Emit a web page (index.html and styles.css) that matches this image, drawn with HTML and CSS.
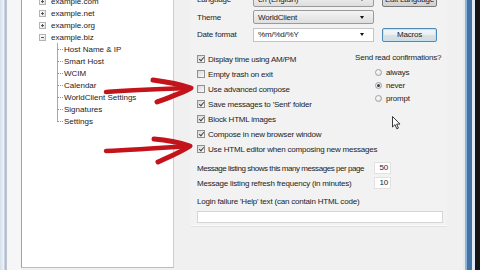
FILE: index.html
```html
<!DOCTYPE html>
<html lang="en">
<head>
    <meta charset="UTF-8">
    <title>WorldClient Settings</title>
    <link rel="stylesheet" href="styles.css">
</head>
<body>

<div class="window">
    <div class="frame-left"></div>
    <div class="gutter"></div>

    <div class="tree">
        <div class="tree-list">
            <div class="node"><span class="expander"></span>example.com</div>
            <div class="node"><span class="expander"></span>example.net</div>
            <div class="node"><span class="expander"></span>example.org</div>
            <div class="node"><span class="expander open"></span>example.biz</div>
            <div class="children">
                <div class="leaf">Host Name &amp; IP</div>
                <div class="leaf">Smart Host</div>
                <div class="leaf">WCIM</div>
                <div class="leaf">Calendar</div>
                <div class="leaf">WorldClient Settings</div>
                <div class="leaf">Signatures</div>
                <div class="leaf last">Settings</div>
            </div>
        </div>
    </div>

    <div class="settings">
        <div class="page">
            <div class="form">
                <div class="form-row">
                    <label>Language</label>
                    <div class="combo"><span class="val">en (English)</span><span class="caret"></span></div>
                    <div class="btn">Edit Language</div>
                </div>
                <div class="form-row">
                    <label>Theme</label>
                    <div class="combo"><span class="val">WorldClient</span><span class="caret"></span></div>
                </div>
                <div class="form-row">
                    <label>Date format</label>
                    <div class="combo edit"><span class="val">%m/%d/%Y</span><span class="caret"></span></div>
                    <div class="btn focus">Macros</div>
                </div>
            </div>

            <div class="options">
                <div class="checks">
                    <div class="check"><span class="box on"></span>Display time using AM/PM</div>
                    <div class="check"><span class="box"></span>Empty trash on exit</div>
                    <div class="check"><span class="box"></span>Use advanced compose</div>
                    <div class="check"><span class="box on"></span>Save messages to 'Sent' folder</div>
                    <div class="check"><span class="box on"></span>Block HTML images</div>
                    <div class="check"><span class="box on"></span>Compose in new browser window</div>
                    <div class="check"><span class="box on"></span>Use HTML editor when composing new messages</div>
                </div>
                <div class="readconf">
                    <div class="readconf-title">Send read confirmations?</div>
                    <div class="radio"><span class="dot"></span>always</div>
                    <div class="radio"><span class="dot on"></span>never</div>
                    <div class="radio"><span class="dot"></span>prompt</div>
                </div>
            </div>

            <div class="num-row">
                <span class="tight">Message listing shows this many messages per page</span>
                <div class="num">50</div>
            </div>
            <div class="num-row">
                <span>Message listing refresh frequency (in minutes)</span>
                <div class="num">10</div>
            </div>

            <div class="help-label">Login failure 'Help' text (can contain HTML code)</div>
            <div class="help"></div>
        </div>
    </div>

    <div class="frame-right"></div>
</div>

<svg class="arrows" width="480" height="270" viewBox="0 0 480 270">
    <g fill="none" stroke="#c3131b" stroke-linecap="round" stroke-linejoin="round">
        <path stroke-width="4.5" d="M106 92 C130 90 160 89 190 88"/>
        <path stroke-width="5" d="M153 80 C168 82 182 85 191 88 C182 93 168 98 157 102"/>
        <path stroke-width="4.5" d="M106 151 C130 150 160 148 189 146"/>
        <path stroke-width="5" d="M154 139 C168 140 181 143 190 146 C181 152 169 157 158 162"/>
    </g>
</svg>

<svg class="cursor" width="9" height="14" viewBox="0 0 9 14">
    <path d="M0.5 0.5 L0.5 11 L3 8.6 L4.8 12.8 L6.4 12.1 L4.7 8.1 L8 8.1 Z" fill="#fff" stroke="#222" stroke-width="0.9"/>
</svg>

</body>
</html>
```

FILE: styles.css
```css
* {
    box-sizing: border-box;
}

body {
    margin: 0;
    width: 480px;
    height: 270px;
    overflow: hidden;
    position: relative;
    font-family: "Liberation Sans", Arial, sans-serif;
    font-size: 8px;
    color: #1c1c1c;
    background-color: #f0f0f0;
    white-space: nowrap;
}

.window {
    display: flex;
    height: 270px;
}

.frame-left {
    width: 7px;
    background: linear-gradient(to right, #d4e0ec 0, #eef3f8 4px, #a9b7c6 5px, #c3ccd6 7px);
}

.gutter {
    width: 14px;
    background-color: #f6f6f6;
}

/* tree */

.tree {
    width: 153px;
    height: 268px;
    background-color: #fff;
    border-left: 1px solid #a3a3a3;
    border-right: 1px solid #cdcdcd;
    border-bottom: 1px solid #bdbdbd;
    overflow: hidden;
}

.tree-list {
    margin-top: -5px;
}

.node {
    display: flex;
    align-items: center;
    height: 12px;
    padding-left: 17px;
}

.expander {
    position: relative;
    width: 7px;
    height: 7px;
    margin-right: 5px;
    border: 1px solid #b4b4b4;
    background: linear-gradient(135deg, #fff, #e4e4e4);
}

.expander::before,
.expander::after {
    content: "";
    position: absolute;
    background-color: #555;
}

.expander::before {
    left: 1px;
    top: 2px;
    width: 3px;
    height: 1px;
}

.expander::after {
    left: 2px;
    top: 1px;
    width: 1px;
    height: 3px;
}

.expander.open::after {
    display: none;
}

.children {
    margin-left: 35px;
}

.leaf {
    display: flex;
    align-items: center;
    height: 12px;
    background: linear-gradient(#a9a9a9, #a9a9a9) 0 0 / 1px 100% no-repeat;
}

.leaf.last {
    background-size: 1px 50%;
}

.leaf::before {
    content: "";
    width: 6px;
    border-top: 1px dotted #9a9a9a;
    margin-right: 1px;
}

/* settings page */

.settings {
    flex: 1;
    min-width: 0;
    background-color: #f0f0f0;
    letter-spacing: -0.2px;
}

.page {
    height: 233px;
    margin: 0 16px 0 17px;
    padding: 0 8px 0 6px;
    background-color: #f2f2f2;
    border-bottom: 1px solid #fcfcfc;
    box-shadow: 0 1px 0 #e2e2e2;
}

.form {
    display: flex;
    flex-direction: column;
    gap: 3.5px;
    margin-top: -7.5px;
}

.form-row {
    display: flex;
    align-items: center;
    height: 14px;
}

.form-row label {
    width: 56px;
}

.combo {
    display: flex;
    align-items: center;
    width: 121px;
    height: 14px;
    padding: 0 4px;
    border: 1px solid #9a9a9a;
    border-radius: 2px;
    background: linear-gradient(#f4f4f4, #dedede);
}

.combo.edit {
    background: #fff;
    border-color: #c2c4c8;
    border-radius: 0;
}

.combo .val {
    flex: 1;
}

.caret {
    width: 0;
    height: 0;
    margin-right: 5px;
    border-left: 2.5px solid transparent;
    border-right: 2.5px solid transparent;
    border-top: 3px solid #111;
}

.btn {
    width: 55px;
    height: 14px;
    margin-left: 8px;
    border: 1px solid #7a7a7a;
    border-radius: 2px;
    background: linear-gradient(#f6f6f6 0, #ececec 50%, #dcdcdc 50%, #d0d0d0 100%);
    text-align: center;
    line-height: 12px;
    overflow: hidden;
}

.btn.focus {
    border-color: #4e8ab8;
    box-shadow: inset 0 0 0 1px #c4e2f4;
    background: linear-gradient(#f4f8fb 0, #e8eef2 50%, #dbe2e7 50%, #d2dade 100%);
}

.options {
    display: flex;
    margin-top: 10px;
}

.checks {
    flex: 1;
    min-width: 0;
}

.check {
    display: flex;
    align-items: center;
    height: 15px;
}

.box {
    position: relative;
    flex: none;
    width: 8px;
    height: 8px;
    margin-right: 3px;
    border: 1px solid #909090;
    background: linear-gradient(135deg, #d8d8d8, #fbfbfb);
}

.box.on::after {
    content: "";
    position: absolute;
    left: 1.5px;
    top: 0;
    width: 2px;
    height: 4px;
    border-right: 1.2px solid #444;
    border-bottom: 1.2px solid #444;
    transform: rotate(40deg);
}

.readconf {
    flex: none;
    width: 84px;
    margin-top: -1px;
}

.readconf-title {
    line-height: 13px;
    margin-bottom: 2px;
    text-align: right;
}

.radio {
    display: flex;
    align-items: center;
    height: 13px;
    padding-left: 20px;
}

.dot {
    position: relative;
    flex: none;
    width: 7px;
    height: 7px;
    margin-right: 4px;
    border: 1px solid #a0a0a0;
    border-radius: 50%;
    background: radial-gradient(circle at 35% 35%, #fff, #d6d6d6);
}

.dot.on::after {
    content: "";
    position: absolute;
    left: 1px;
    top: 1px;
    width: 3px;
    height: 3px;
    border-radius: 50%;
    background-color: #2b3e52;
}

.num-row {
    display: grid;
    grid-template-columns: 177px 17px;
    align-items: center;
    height: 15px;
}

.num-row .tight {
    letter-spacing: -0.45px;
}

.options + .num-row {
    margin-top: 4px;
}

.num {
    height: 12px;
    padding-right: 2px;
    background-color: #fff;
    border: 1px solid #e2e2e2;
    text-align: right;
    line-height: 10px;
}

.help-label {
    margin-top: 4px;
    line-height: 13px;
}

.help {
    width: 246px;
    height: 12px;
    margin-top: 3.5px;
    background-color: #fff;
    border: 1px solid #d6d6d6;
}

.frame-right {
    width: 17px;
    background: linear-gradient(to right, #e6ebf0 0, #e6ebf0 2px, #8fb4d8 2px, #8fb4d8 4px, #4274a8 4px, #4274a8 9px, #dfe9f3 9px, #dfe9f3 12px, #141414 12px);
}

/* annotations drawn over the screenshot */

.arrows {
    position: absolute;
    top: 0;
    left: 0;
    pointer-events: none;
}

.cursor {
    position: absolute;
    left: 392px;
    top: 116px;
}
```
